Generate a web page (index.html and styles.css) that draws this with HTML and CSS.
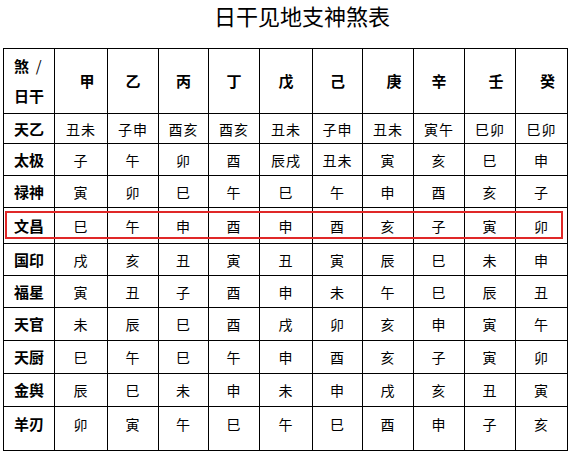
FILE: index.html
```html
<!DOCTYPE html>
<html lang="zh">
<head>
<meta charset="utf-8">
<link rel="stylesheet" href="styles.css">
</head>
<body>
<h1 class="title">日干见地支神煞表</h1>
<div class="wrap">
<table class="sha">
<colgroup>
<col class="c51"><col class="c53"><col class="c51"><col class="c50"><col class="c51"><col class="c53"><col class="c50"><col class="c51"><col class="c51"><col class="c51"><col class="c52">
</colgroup>
<tr class="head">
<th class="corner">煞&nbsp;&nbsp;<span class="slash">/</span><br>日干</th>
<th class="off">甲</th><th>乙</th><th>丙</th><th>丁</th><th>戊</th><th>己</th><th class="off">庚</th><th>辛</th><th class="off">壬</th><th class="off">癸</th>
</tr>
<tr class="r30"><th>天乙</th><td>丑未</td><td>子申</td><td>酉亥</td><td>酉亥</td><td>丑未</td><td>子申</td><td>丑未</td><td>寅午</td><td>巳卯</td><td>巳卯</td></tr>
<tr class="r32"><th>太极</th><td>子</td><td>午</td><td>卯</td><td>酉</td><td>辰戌</td><td>丑未</td><td>寅</td><td>亥</td><td>巳</td><td>申</td></tr>
<tr class="r32"><th>禄神</th><td>寅</td><td>卯</td><td>巳</td><td>午</td><td>巳</td><td>午</td><td>申</td><td>酉</td><td>亥</td><td>子</td></tr>
<tr class="r36"><th>文昌</th><td>巳</td><td>午</td><td>申</td><td>酉</td><td>申</td><td>酉</td><td>亥</td><td>子</td><td>寅</td><td>卯</td></tr>
<tr class="r32"><th>国印</th><td>戌</td><td>亥</td><td>丑</td><td>寅</td><td>丑</td><td>寅</td><td>辰</td><td>巳</td><td>未</td><td>申</td></tr>
<tr class="r32"><th>福星</th><td>寅</td><td>丑</td><td>子</td><td>酉</td><td>申</td><td>未</td><td>午</td><td>巳</td><td>辰</td><td>丑</td></tr>
<tr class="r33"><th>天官</th><td>未</td><td>辰</td><td>巳</td><td>酉</td><td>戌</td><td>卯</td><td>亥</td><td>申</td><td>寅</td><td>午</td></tr>
<tr class="r33"><th>天厨</th><td>巳</td><td>午</td><td>巳</td><td>午</td><td>申</td><td>酉</td><td>亥</td><td>子</td><td>寅</td><td>卯</td></tr>
<tr class="r33"><th>金舆</th><td>辰</td><td>巳</td><td>未</td><td>申</td><td>未</td><td>申</td><td>戌</td><td>亥</td><td>丑</td><td>寅</td></tr>
<tr class="last"><th>羊刃</th><td>卯</td><td>寅</td><td>午</td><td>巳</td><td>午</td><td>巳</td><td>酉</td><td>申</td><td>子</td><td>亥</td></tr>
</table>
<div class="mark"></div>
</div>
</body>
</html>
```
FILE: styles.css
```css
html, body {
  margin: 0;
  padding: 0;
  background: #fff;
}
body {
  font-family: "Noto Sans CJK SC", "Noto Sans", sans-serif;
  color: #000;
}
.title {
  margin: 0;
  height: 48px;
  padding-left: 34px;
  font-size: 22px;
  font-weight: 400;
  line-height: 30px;
  text-align: center;
  box-sizing: border-box;
}
.wrap {
  position: relative;
  margin-left: 3px;
  width: 565px;
}
.sha {
  border-collapse: collapse;
  table-layout: fixed;
  width: 565px;
}
.c51 { width: 51px; }
.c53 { width: 53px; }
.c50 { width: 50px; }
.c52 { width: 52px; }
.sha th, .sha td {
  border: 1px solid #000;
  padding: 0;
  text-align: center;
  vertical-align: middle;
  font-size: 14px;
  line-height: 16px;
  letter-spacing: 1px;
}
.sha th {
  font-weight: 700;
  font-size: 15px;
  letter-spacing: 0;
}
.head th {
  height: 64px;
}
.head .corner {
  text-align: left;
  padding-left: 10px;
  line-height: 30px;
}
.slash {
  font-weight: 400;
}
.head .off {
  padding-left: 12px;
}
.r30 th, .r30 td { height: 29px; }
.r32 th, .r32 td { height: 31px; }
.r33 th, .r33 td { height: 32px; }
.r36 th, .r36 td { height: 35px; }
.last th, .last td {
  height: 44px;
  vertical-align: top;
  padding-top: 9px;
  box-sizing: border-box;
}
.mark {
  position: absolute;
  left: 2px;
  top: 163px;
  width: 554px;
  height: 24px;
  border: 2px solid #e02828;
}
```
